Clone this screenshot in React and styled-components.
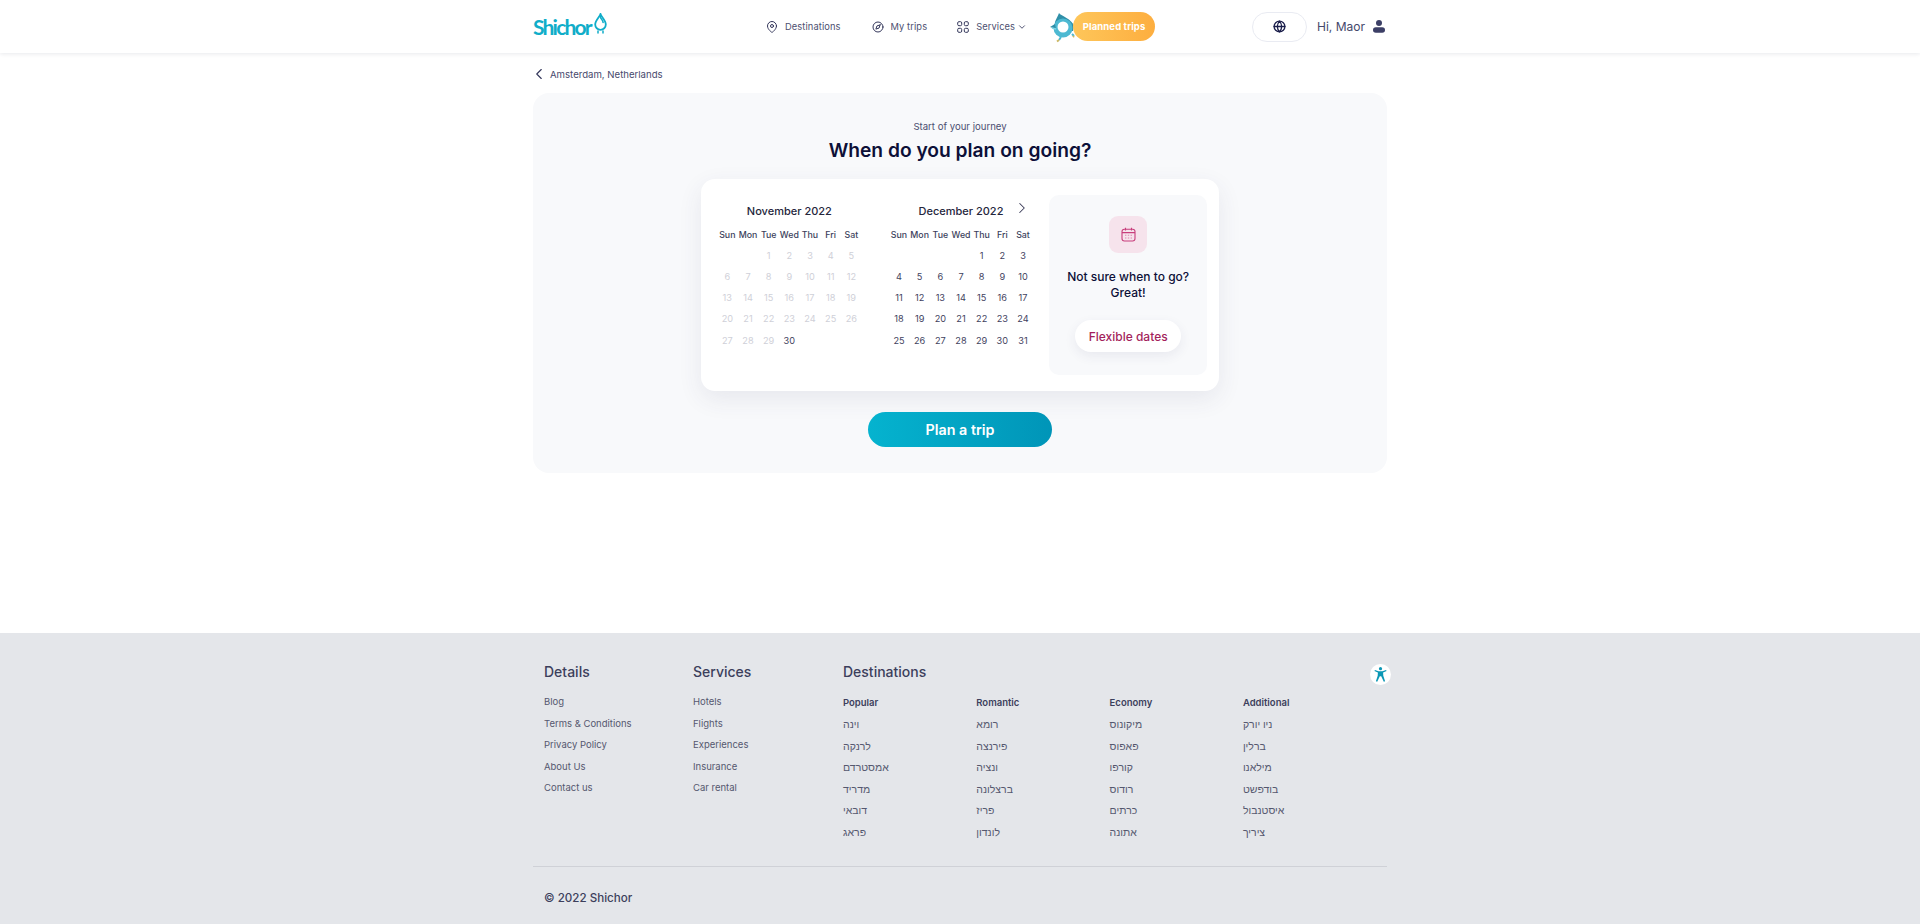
import styled, { createGlobalStyle } from 'styled-components';
import { FiMapPin, FiCompass, FiChevronDown, FiChevronLeft, FiChevronRight, FiGlobe } from 'react-icons/fi';

const GlobalStyle = createGlobalStyle`
  html, body { margin: 0; padding: 0; background: #fff; }
  body { font-family: Inter, "Liberation Sans", sans-serif; color: #3c3f5c; }
  a { color: inherit; text-decoration: none; }
`;

const Header = styled.header`
  height: 53px;
  background: #fff;
  box-shadow: 0 1px 4px rgba(30, 35, 70, 0.1);
  display: flex;
  justify-content: center;
`;

const HeaderInner = styled.div`
  width: 854px;
  display: flex;
  align-items: center;
`;

const Logo = styled.div`
  display: flex;
  align-items: center;
  width: 233px;
  font-family: Lato, sans-serif;
  font-size: 21px;
  font-weight: 700;
  letter-spacing: -1.8px;
  color: #10adc9;
`;

const Nav = styled.nav`
  display: flex;
  align-items: center;
  font-size: 9.3px;
  color: #4d5070;
  letter-spacing: 0.1px;
`;

const NavItem = styled.a`
  display: flex;
  align-items: center;
  gap: 7px;
  margin-right: ${(p) => p.$gap}px;
  svg { font-size: ${(p) => p.$icon || 12}px; color: #33365a; }
`;

const Chevron = styled(FiChevronDown)`
  margin-left: -5px;
  && { font-size: 10px; }
`;

const PlannedWrap = styled.div`
  position: relative;
  margin-left: 46px;
`;

const Rocket = styled.svg`
  position: absolute;
  left: -23px;
  top: 1px;
`;

const PlannedButton = styled.a`
  position: relative;
  display: flex;
  align-items: center;
  justify-content: center;
  width: 82px;
  height: 29px;
  border-radius: 15px;
  background: linear-gradient(90deg, #fec65a, #fdae3f);
  color: #fff;
  font-size: 9.5px;
  font-weight: 700;
`;

const HeaderRight = styled.div`
  margin-left: auto;
  display: flex;
  align-items: center;
`;

const LangButton = styled.button`
  width: 55px;
  height: 30px;
  margin-right: 10px;
  border: 1px solid #e9ebf2;
  border-radius: 15px;
  background: #fff;
  display: flex;
  align-items: center;
  justify-content: center;
  color: #1b1e4b;
  font-size: 13px;
  padding: 0;
  svg { stroke-width: 2.4; }
`;

const Hello = styled.span`
  font-size: 12px;
  color: #45486b;
`;

const UserIcon = styled.svg`
  margin-left: 8px;
  margin-right: 2px;
`;

const Main = styled.main`
  height: 580px;
  display: flex;
  flex-direction: column;
  align-items: center;
`;

const Back = styled.a`
  width: 854px;
  height: 40px;
  padding-top: 2px;
  box-sizing: border-box;
  display: flex;
  align-items: center;
  gap: 2px;
  font-size: 9.6px;
  color: #46496c;
  svg { font-size: 18px; stroke-width: 1.5; color: #33365a; margin-left: -3px; }
`;

const Panel = styled.section`
  width: 854px;
  height: 380px;
  box-sizing: border-box;
  padding-top: 28px;
  background: #f8f9fb;
  border-radius: 16px;
  display: flex;
  flex-direction: column;
  align-items: center;
`;

const Eyebrow = styled.div`
  font-size: 9.6px;
  line-height: 12px;
  color: #4b4e70;
`;

const Title = styled.h1`
  margin: 4px 0 0;
  font-size: 19.2px;
  line-height: 26px;
  font-weight: 600;
  color: #0d1038;
`;

const Card = styled.div`
  width: 518px;
  height: 212px;
  margin-top: 16px;
  box-sizing: border-box;
  padding: 16px 12px 16px 16px;
  background: #fff;
  border-radius: 14px;
  box-shadow: 0 8px 24px rgba(50, 55, 100, 0.09);
  display: flex;
`;

const Month = styled.div`
  position: relative;
  width: 145px;
  margin-right: ${(p) => p.$gap}px;
`;

const MonthTitle = styled.div`
  height: 29px;
  padding-top: 10px;
  box-sizing: border-box;
  text-align: center;
  font-size: 11px;
  line-height: 12px;
  font-weight: 500;
  color: #25263c;
`;

const NextArrow = styled.span`
  position: absolute;
  right: 2px;
  top: 4px;
  font-size: 18px;
  line-height: 18px;
  color: #3a3c58;
  svg { stroke-width: 1.4; }
`;

const Grid = styled.div`
  display: grid;
  grid-template-columns: repeat(7, 1fr);
  grid-auto-rows: 21.1px;
  align-items: center;
  text-align: center;
`;

const Weekday = styled.div`
  font-size: 8.8px;
  font-weight: 500;
  color: #3c3f5c;
`;

const Day = styled.div`
  font-size: 9.2px;
  color: ${(p) => (p.$off ? '#cfd0d8' : '#3f4260')};
`;

const Side = styled.aside`
  width: 158px;
  height: 180px;
  box-sizing: border-box;
  padding-top: 21px;
  border-radius: 10px;
  background: #f8f9fb;
  display: flex;
  flex-direction: column;
  align-items: center;
`;

const IconTile = styled.div`
  width: 38px;
  height: 37px;
  border-radius: 9px;
  background: #f6e3ec;
  display: flex;
  align-items: center;
  justify-content: center;
`;

const SideText = styled.div`
  margin-top: 16px;
  text-align: center;
  font-size: 12px;
  line-height: 15.5px;
  font-weight: 500;
  color: #0d1038;
`;

const FlexButton = styled.a`
  margin-top: 20px;
  width: 106px;
  height: 32px;
  border-radius: 16px;
  background: #fff;
  box-shadow: 0 4px 12px rgba(50, 55, 100, 0.08);
  display: flex;
  align-items: center;
  justify-content: center;
  font-size: 12px;
  font-weight: 500;
  color: #a31f5c;
`;

const PlanButton = styled.a`
  margin-top: 21px;
  width: 184px;
  height: 35px;
  border-radius: 18px;
  background: linear-gradient(90deg, #05b3cf, #0095b8);
  display: flex;
  align-items: center;
  justify-content: center;
  color: #fff;
  font-size: 14.3px;
  font-weight: 600;
`;

const Footer = styled.footer`
  position: relative;
  height: 291px;
  background: #e4e6ea;
  display: flex;
  justify-content: center;
`;

const FooterInner = styled.div`
  width: 854px;
`;

const FooterTop = styled.div`
  height: 234px;
  box-sizing: border-box;
  padding: 30px 0 0 11px;
  border-bottom: 1px solid #cfd1d7;
  display: flex;
`;

const FooterCol = styled.div`
  width: ${(p) => p.$width}px;
`;

const FooterTitle = styled.h3`
  margin: 0 0 10px;
  font-size: 14px;
  line-height: 18px;
  font-weight: 500;
  color: #3c3f5c;
`;

const FooterLink = styled.a`
  display: block;
  font-size: 9.5px;
  line-height: 21.5px;
  color: #55586f;
`;

const DestGrid = styled.div`
  display: grid;
  grid-template-columns: repeat(4, 133.3px);
  margin-top: 3px;
`;

const DestHead = styled.div`
  font-size: 9.5px;
  line-height: 23px;
  font-weight: 600;
  color: #3c3f5c;
`;

const DestLink = styled.a`
  display: block;
  font-family: "Noto Sans", "Liberation Sans", sans-serif;
  font-size: 10.5px;
  line-height: 21.5px;
  color: #55586f;
`;

const Copyright = styled.div`
  padding: 22px 0 0 11px;
  font-size: 11.6px;
  line-height: 18px;
  font-weight: 500;
  color: #3c3f5c;
`;

const A11yButton = styled.button`
  position: absolute;
  left: 1370px;
  top: 31px;
  width: 21px;
  height: 21px;
  padding: 0;
  border: none;
  border-radius: 50%;
  background: #fff;
  display: flex;
  align-items: center;
  justify-content: center;
`;

const WEEK = ['Sun', 'Mon', 'Tue', 'Wed', 'Thu', 'Fri', 'Sat'];

const DESTINATIONS = [
  { head: 'Popular', items: ['וינה', 'לרנקה', 'אמסטרדם', 'מדריד', 'דובאי', 'פראג'] },
  { head: 'Romantic', items: ['רומא', 'פירנצה', 'ונציה', 'ברצלונה', 'פריז', 'לונדון'] },
  { head: 'Economy', items: ['מיקונוס', 'פאפוס', 'קורפו', 'רודוס', 'כרתים', 'אתונה'] },
  { head: 'Additional', items: ['ניו יורק', 'ברלין', 'מילאנו', 'בודפשט', 'איסטנבול', 'ציריך'] },
];

function ServicesIcon() {
  return (
    <svg width="12" height="12" viewBox="0 0 12 12" fill="none" stroke="#33365a" strokeWidth="1">
      <rect x="0.7" y="0.7" width="4" height="4" rx="1.2" />
      <rect x="7.3" y="0.7" width="4" height="4" rx="1.2" />
      <rect x="0.7" y="7.3" width="4" height="4" rx="1.2" />
      <rect x="7.3" y="7.3" width="4" height="4" rx="1.2" />
    </svg>
  );
}

function Drop() {
  return (
    <svg width="13" height="22" viewBox="0 0 13 22" fill="none" style={{ marginLeft: 3, marginTop: -5 }}>
      <path d="M6.5 1C7.5 4 11.8 7.5 11.8 11.5a5.3 5.3 0 0 1-10.6 0C1.2 7.5 5.5 4 6.5 1Z" stroke="#10adc9" strokeWidth="1.8" />
      <path d="M6.5 4.5c1 2 2.6 3 2.6 5" stroke="#10adc9" strokeWidth="1.6" strokeLinecap="round" />
      <path d="M4 18v2M9 18v2" stroke="#10adc9" strokeWidth="1.5" strokeLinecap="round" />
    </svg>
  );
}

function RocketDrop() {
  return (
    <Rocket width="30" height="30" viewBox="0 0 30 30" fill="none">
      <path d="M9 0c2 3 13 6 15 13l-1 5H4l1-9C6 6 8 3 9 0Z" fill="#2f8fa8" />
      <circle cx="13" cy="15" r="9.5" fill="#4db9d2" />
      <circle cx="13" cy="14" r="5.5" fill="#fff" />
      <path d="M0 14l5-3 1 5Z" fill="#2f8fa8" />
      <path d="M2 15l4 1" stroke="#7fd4e4" strokeWidth="1.5" />
      <path d="M11 24l-2 3M22 21l2 2" stroke="#4db9d2" strokeWidth="2" />
      <path d="M9 27l-2 1.5M24 23l-1 1" stroke="#cdb864" strokeWidth="2" />
    </Rocket>
  );
}

function Person() {
  return (
    <UserIcon width="12" height="13" viewBox="0 0 12 13" fill="#3c3f66">
      <circle cx="6" cy="3" r="3" />
      <rect x="0" y="7.2" width="12" height="5.6" rx="2.8" />
    </UserIcon>
  );
}

function CalendarIcon() {
  return (
    <svg width="15" height="15" viewBox="0 0 15 15" fill="none" stroke="#c83f7c" strokeWidth="1.1">
      <rect x="1" y="2.2" width="13" height="11.8" rx="2.4" />
      <path d="M1 5.6h13M4.5 .8v2.8M10.5 .8v2.8" />
      <path d="M4 8.2h1.4M6.8 8.2h1.4M9.6 8.2H11M4 11h1.4M6.8 11h1.4M9.6 11H11" strokeOpacity="0.55" />
    </svg>
  );
}

function A11yIcon() {
  return (
    <svg width="13" height="15" viewBox="0 0 13 15" fill="#0b97b5">
      <circle cx="6.5" cy="1.7" r="1.6" />
      <path d="M.4 3.9 1 3l3.6 1.3h3.8L12 3l.6.9-3.5 1.7.2 3.2 1.8 5.4-1.3.5-2.6-5.4h-1.4l-2.6 5.4-1.3-.5 1.8-5.4.2-3.2Z" />
    </svg>
  );
}

function CalendarMonth({ title, offset, days, isPast, gap, children }) {
  const cells = [];
  for (let i = 0; i < offset; i++) cells.push(<div key={`b${i}`} />);
  for (let d = 1; d <= days; d++) {
    cells.push(<Day key={d} $off={isPast && isPast(d)}>{d}</Day>);
  }
  return (
    <Month $gap={gap}>
      <MonthTitle>{title}</MonthTitle>
      {children}
      <Grid>
        {WEEK.map((w) => <Weekday key={w}>{w}</Weekday>)}
        {cells}
      </Grid>
    </Month>
  );
}

export default function App() {
  return (
    <>
      <GlobalStyle />
      <Header>
        <HeaderInner>
          <Logo>Shichor<Drop /></Logo>
          <Nav>
            <NavItem $gap={31}><FiMapPin />Destinations</NavItem>
            <NavItem $gap={30}><FiCompass />My trips</NavItem>
            <NavItem $gap={0}><ServicesIcon />Services<Chevron /></NavItem>
            <PlannedWrap>
              <RocketDrop />
              <PlannedButton>Planned trips</PlannedButton>
            </PlannedWrap>
          </Nav>
          <HeaderRight>
            <LangButton aria-label="Language"><FiGlobe /></LangButton>
            <Hello>Hi, Maor</Hello>
            <Person />
          </HeaderRight>
        </HeaderInner>
      </Header>
      <Main>
        <Back><FiChevronLeft />Amsterdam, Netherlands</Back>
        <Panel>
          <Eyebrow>Start of your journey</Eyebrow>
          <Title>When do you plan on going?</Title>
          <Card>
            <CalendarMonth title="November 2022" offset={2} days={30} isPast={(d) => d < 30} gap={27} />
            <CalendarMonth title="December 2022" offset={4} days={31} gap={16}>
              <NextArrow><FiChevronRight /></NextArrow>
            </CalendarMonth>
            <Side>
              <IconTile><CalendarIcon /></IconTile>
              <SideText>Not sure when to go?<br />Great!</SideText>
              <FlexButton>Flexible dates</FlexButton>
            </Side>
          </Card>
          <PlanButton>Plan a trip</PlanButton>
        </Panel>
      </Main>
      <Footer>
        <FooterInner>
          <FooterTop>
            <FooterCol $width={149}>
              <FooterTitle>Details</FooterTitle>
              {['Blog', 'Terms & Conditions', 'Privacy Policy', 'About Us', 'Contact us'].map((t) => <FooterLink key={t}>{t}</FooterLink>)}
            </FooterCol>
            <FooterCol $width={150}>
              <FooterTitle>Services</FooterTitle>
              {['Hotels', 'Flights', 'Experiences', 'Insurance', 'Car rental'].map((t) => <FooterLink key={t}>{t}</FooterLink>)}
            </FooterCol>
            <FooterCol $width={533}>
              <FooterTitle>Destinations</FooterTitle>
              <DestGrid>
                {DESTINATIONS.map((col) => (
                  <div key={col.head}>
                    <DestHead>{col.head}</DestHead>
                    {col.items.map((t) => <DestLink key={t}>{t}</DestLink>)}
                  </div>
                ))}
              </DestGrid>
            </FooterCol>
          </FooterTop>
          <Copyright>© 2022 Shichor</Copyright>
        </FooterInner>
        <A11yButton aria-label="Accessibility"><A11yIcon /></A11yButton>
      </Footer>
    </>
  );
}
